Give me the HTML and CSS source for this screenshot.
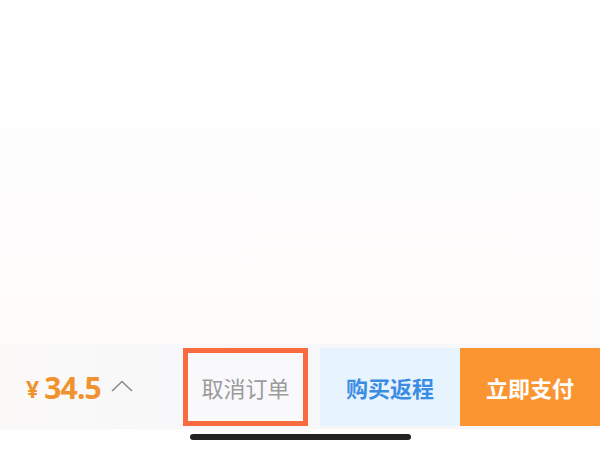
FILE: index.html
```html
<!DOCTYPE html>
<html lang="zh-CN">
<head>
<meta charset="utf-8">
<link rel="stylesheet" href="styles.css">
</head>
<body>
<div class="page">
  <div class="content"></div>
  <div class="bar">
    <div class="price">
      <span class="yen">¥</span>
      <span class="amount">34.5</span>
      <svg class="chev" width="22" height="12" viewBox="0 0 22 12"><path d="M1 11 L11 1.5 L21 11" fill="none" stroke="#8a8a8a" stroke-width="1.6"/></svg>
    </div>
    <div class="cancel">取消订单</div>
    <div class="btn btn-return">购买返程</div>
    <div class="btn btn-pay">立即支付</div>
  </div>
  <div class="home"><div class="indicator"></div></div>
</div>
</body>
</html>
```
FILE: styles.css
```css
html, body {
  margin: 0;
  padding: 0;
  background: #fefefe;
}
.page {
  width: 600px;
  height: 450px;
  display: flex;
  flex-direction: column;
  font-family: "Noto Sans CJK SC", "Noto Sans", sans-serif;
}
.content {
  flex: 1;
  background: linear-gradient(#ffffff, #fefcfb);
}
.bar {
  height: 78px;
  padding: 4px 0 3px;
  display: flex;
  align-items: stretch;
  background: linear-gradient(90deg, #fbf9f8, #f7f7fa 40%, #f8f8fa);
}
.price {
  width: 157px;
  padding-left: 26px;
  display: flex;
  align-items: center;
  color: #f0922e;
}
.yen {
  font-family: "Noto Sans", sans-serif;
  font-weight: 700;
  font-size: 23px;
  margin-right: 5px;
  margin-top: 3px;
}
.amount {
  font-family: "Noto Sans", sans-serif;
  font-weight: 700;
  font-size: 30px;
  letter-spacing: -0.8px;
  margin-right: 10px;
}
.chev {
  margin-top: -2px;
}
.cancel {
  width: 115px;
  border: 5px solid #f96c3f;
  background: #f9f9fb;
  display: flex;
  align-items: center;
  justify-content: center;
  color: #9b9b9b;
  font-size: 22px;
  margin-right: 12px;
  box-sizing: content-box;
  height: 68px;
}
.btn {
  width: 140px;
  display: flex;
  align-items: center;
  justify-content: center;
  font-size: 22px;
  font-weight: 700;
}
.btn-return {
  background: #e7f3fd;
  color: #3b8de3;
}
.btn-pay {
  background: #fb9532;
  color: #ffffff;
}
.home {
  height: 21px;
  display: flex;
  justify-content: center;
  padding-top: 5px;
  box-sizing: border-box;
  background: #fefefe;
}
.indicator {
  width: 221px;
  height: 6px;
  border-radius: 3px;
  background: #222222;
}
```
